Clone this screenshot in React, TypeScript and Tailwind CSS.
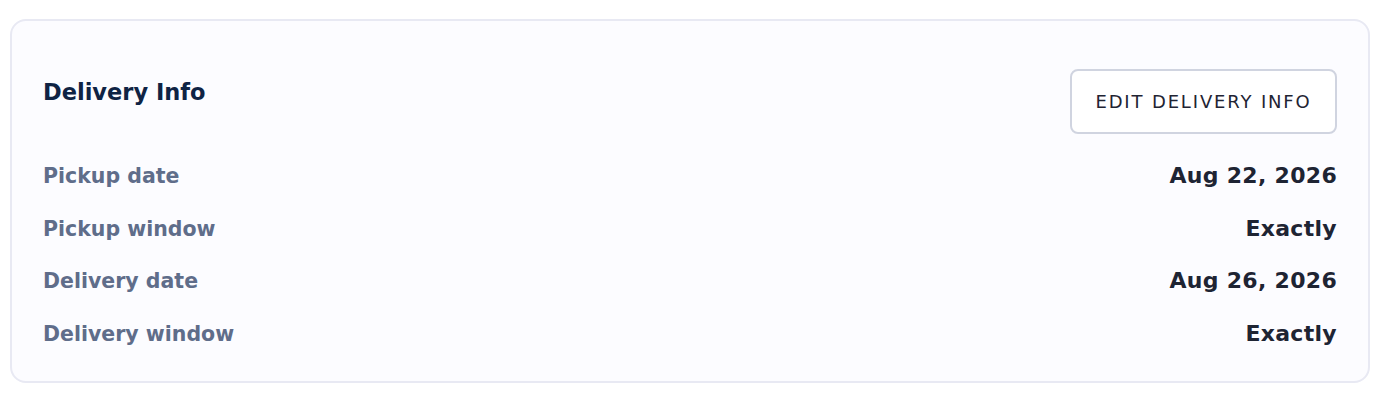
import React from 'react';

const rows = [
  { label: 'Pickup date', value: 'Aug 22, 2026' },
  { label: 'Pickup window', value: 'Exactly' },
  { label: 'Delivery date', value: 'Aug 26, 2026' },
  { label: 'Delivery window', value: 'Exactly' },
];

export default function App() {
  return (
    <div className="min-h-screen bg-white px-[10px] pt-[19px]" style={{ fontFamily: '"DejaVu Sans", "Noto Sans", sans-serif' }}>
      <div className="rounded-[16px] border-2 border-[#e8e9f3] bg-[#fcfcff] px-[31px] pt-[48px] pb-[21px]">
        <div className="flex items-start justify-between">
          <h2 className="mt-[7px] text-[22.5px] font-bold leading-[32px] text-[#0f2344]">Delivery Info</h2>
          <button className="h-[65px] w-[267px] rounded-[8px] border-2 border-[#d0d4e0] bg-white text-[18px] font-normal tracking-[1.85px] text-[#1f2433]">
            EDIT DELIVERY INFO
          </button>
        </div>
        <div className="mt-[16px] flex flex-col">
          {rows.map((r) => (
            <div key={r.label} className="flex h-[52.5px] items-center justify-between leading-[28px]">
              <span className="text-[20.5px] font-bold text-[#5f6d8a]">{r.label}</span>
              <span className="text-[22px] font-bold tracking-[0.3px] text-[#1e2433]">{r.value}</span>
            </div>
          ))}
        </div>
      </div>
    </div>
  );
}
